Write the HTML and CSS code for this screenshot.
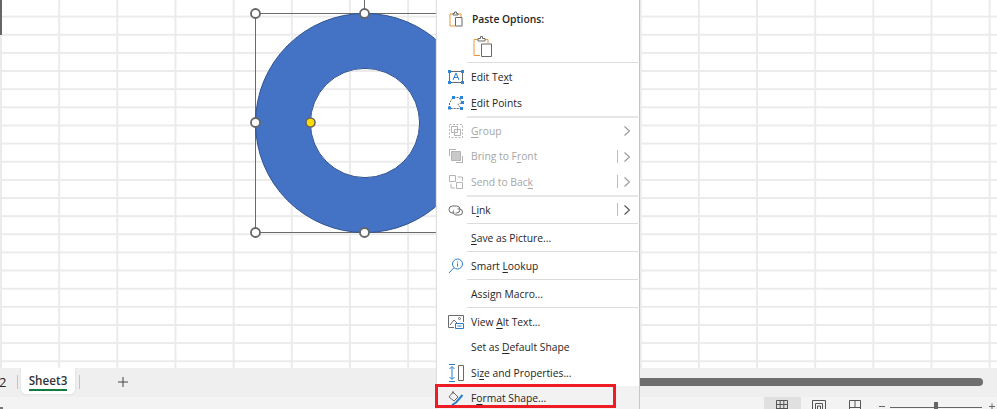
FILE: index.html
```html
<!DOCTYPE html>
<html lang="en">
<head>
<meta charset="utf-8">
<title>Format Shape</title>
<link rel="stylesheet" href="styles.css">
</head>
<body>
<div class="app">
  <main class="sheet">
    <div class="active-cell"></div>
    <svg class="shape" width="240" height="240" viewBox="250 0 240 240">
      <path class="sel" d="M364.5 0V13.5M255.5 13.5H490M255.5 13.5V232.5M255.5 232.5H490"/>
      <path class="donut" fill-rule="evenodd" d="M255.500 123a109.500 109.500 0 1 0 219 0a109.500 109.500 0 1 0 -219 0zM310.400 123a54.600 54.600 0 1 1 109.200 0a54.600 54.600 0 1 1 -109.200 0z"/>
      <circle class="handle" cx="255.500" cy="13.500" r="4.500"/>
      <circle class="handle" cx="364.500" cy="13.500" r="4.500"/>
      <circle class="handle" cx="255.500" cy="122.500" r="4.500"/>
      <circle class="handle" cx="255.500" cy="232.500" r="4.500"/>
      <circle class="handle" cx="364.500" cy="232.500" r="4.500"/>
      <circle class="adjust" cx="310.500" cy="122.500" r="4.500"/>
    </svg>
  </main>

  <div class="tabbar">
    <span class="tab-cut">2</span>
    <span class="tab-sep tab-sep-a"></span>
    <div class="tab"><span class="tab-label">Sheet3</span></div>
    <span class="tab-sep"></span>
    <svg class="add" width="12" height="12" viewBox="0 0 12 12"><path d="M6 1V11M1 6H11"/></svg>
    <div class="scroll"></div>
  </div>

  <div class="status">
    <span class="status-mark"></span>
    <div class="view view-on">
      <svg width="14" height="14" viewBox="0 0 14 14"><path d="M1.500 1.500H12.500V12.500H1.500ZM1.500 5.500H12.500M1.500 9.500H12.500M5.200 1.500V12.500M8.800 1.500V12.500"/></svg>
    </div>
    <div class="view">
      <svg width="14" height="14" viewBox="0 0 14 14"><path d="M.5 1.500H13.500V13.500H.5ZM3.500 4.500H10.500V13.500H3.500ZM5.500 7H8.500V11H5.500Z"/></svg>
    </div>
    <div class="view">
      <svg width="14" height="14" viewBox="0 0 14 14"><path d="M1.500 1.500H12.500V13.500H1.500ZM7 1.500V8.500M1.500 8.500H12.500"/></svg>
    </div>
    <svg class="zoom" width="118" height="12" viewBox="0 0 118 12">
      <path class="zoom-line" d="M0 9.500H6M11 10.500H103M110 9.500H116M113 6.500V12"/>
      <rect class="zoom-thumb" x="55" y="5" width="4" height="7"/>
    </svg>
  </div>

  <nav class="menu">
    <div class="row row-head">
      <svg class="ic" width="16" height="16" viewBox="0 0 16 16"><path class="o" d="M5 3H2V15H7"/><path class="o" d="M10 3H13V6"/><path class="k" d="M5 4V2.500H6.500V1H8.500V2.500H10V4ZM7.500 6.500H14V15H7.500Z"/></svg>
      <b class="head-label">Paste Options:</b>
    </div>
    <div class="paste">
      <svg width="20" height="21" viewBox="0 0 20 21"><path class="o" d="M5 3.500H1V19.500H7"/><path class="o" d="M12 3.500H15V7"/><path class="k" d="M5 5V2.500H7.500V.5H9.500V2.500H12V5ZM8.500 8H18.500V20.500H8.500Z"/></svg>
    </div>
    <div class="sep"></div>

    <div class="row">
      <svg class="ic" width="16" height="16" viewBox="0 0 16 16"><path class="k" d="M1.500 2.500H14.500V13.500H1.500Z"/><path class="b" d="M5 11L8 4L11 11M6 8.500H10"/><path class="bf" d="M0 1H3V4H0ZM13 1H16V4H13ZM0 12H3V15H0ZM13 12H16V15H13Z"/></svg>
      <span>Edit Te<u>x</u>t</span>
    </div>
    <div class="row">
      <svg class="ic" width="16" height="16" viewBox="0 0 16 16"><path class="k" stroke-dasharray="2 1" d="M1.500 13V8L5 2.500H11L14 7.500L10 9.500L13.500 13.500H2"/><path class="bf" d="M0 11.500H3V14.500H0ZM4 1H7V4H4ZM12 1H15V4H12ZM13 6H16V9H13ZM12 12H15V15H12Z"/></svg>
      <span><u>E</u>dit Points</span>
    </div>
    <div class="sep sep-wide"></div>

    <div class="row off">
      <svg class="ic" width="16" height="16" viewBox="0 0 16 16"><path class="g" stroke-dasharray="2 1.500" d="M1.500 1.500H14.500V14.500H1.500Z"/><path class="g" d="M3.500 3.500H9.500V9.500H3.500ZM6.500 6.500H12.500V12.500H6.500Z"/></svg>
      <span><u>G</u>roup</span>
      <svg class="chev" width="6" height="10" viewBox="0 0 6 10"><path d="M.5 .5L5.500 5L.5 9.500"/></svg>
    </div>
    <div class="row off">
      <svg class="ic" width="16" height="16" viewBox="0 0 16 16"><path class="g" d="M1 1.500H8M1.500 1V8M15 14.500H8M14.500 15V8"/><path class="gf" d="M3.500 3.500H12.500V12.500H3.500Z"/></svg>
      <span>Bring to F<u>r</u>ont</span>
      <i class="bar"></i>
      <svg class="chev" width="6" height="10" viewBox="0 0 6 10"><path d="M.5 .5L5.500 5L.5 9.500"/></svg>
    </div>
    <div class="row off">
      <svg class="ic" width="16" height="16" viewBox="0 0 16 16"><path class="g" d="M1.500 1.500H7.500V7.500H1.500ZM8.500 8.500H14.500V14.500H8.500ZM9.500 3H14.500V7M3 9.500V14H7"/></svg>
      <span>Send to Bac<u>k</u></span>
      <i class="bar"></i>
      <svg class="chev" width="6" height="10" viewBox="0 0 6 10"><path d="M.5 .5L5.500 5L.5 9.500"/></svg>
    </div>
    <div class="sep sep-wide"></div>

    <div class="row">
      <svg class="ic" width="16" height="16" viewBox="0 0 16 16"><path class="k" d="M6.500 11H4.500A3.500 3.500 0 0 1 4.500 4H8.500A3.500 3.500 0 0 1 8.500 11H7.500"/><path class="k" d="M9.500 7H11.500A3 3 0 0 1 11.500 13H8A3 3 0 0 1 5.500 8.500"/></svg>
      <span>L<u>i</u>nk</span>
      <i class="bar"></i>
      <svg class="chev chev-on" width="6" height="10" viewBox="0 0 6 10"><path d="M.5 .5L5.500 5L.5 9.500"/></svg>
    </div>
    <div class="sep"></div>
    <div class="row"><span><u>S</u>ave as Picture...</span></div>
    <div class="sep"></div>

    <div class="row">
      <svg class="ic" width="16" height="16" viewBox="0 0 16 16"><circle class="b" cx="9.500" cy="6" r="5"/><path class="b" d="M6 9.500L1 15"/><path class="b" d="M9.500 5.500V8.500M9.500 3.500V4.500"/></svg>
      <span>Smart <u>L</u>ookup</span>
    </div>
    <div class="sep"></div>
    <div class="row"><span>Assi<u>g</u>n Macro...</span></div>
    <div class="sep"></div>

    <div class="row">
      <svg class="ic" width="16" height="16" viewBox="0 0 16 16"><path class="k" d="M6 13.500H.5V1.500H15.500V8"/><path class="k" d="M2 11L6 6L9 9"/><circle class="k" cx="11.500" cy="4.500" r="1"/><path class="b" d="M7.500 9.500H15.500V14.500H7.500ZM9.500 12H13.500"/></svg>
      <span>View <u>A</u>lt Text...</span>
    </div>
    <div class="row"><span>Set as <u>D</u>efault Shape</span></div>
    <div class="row">
      <svg class="ic" width="16" height="18" viewBox="0 0 16 18"><path class="b" d="M4 3V15M1.500 5L4 2.500L6.500 5M1.500 13L4 15.500L6.500 13M1 .5H7M1 17.500H7"/><path class="k" d="M10.500 1.500H15.500V16.500H10.500Z"/></svg>
      <span>Si<u>z</u>e and Properties...</span>
    </div>
    <div class="row row-hot">
      <svg class="ic" width="16" height="16" viewBox="0 0 16 16"><path class="k" d="M1 7L5 2L10 7L6 11Z"/><path class="k" d="M5 1V4"/><path class="b b-thick" d="M14.500 5L8 12.500L4 15"/></svg>
      <span>F<u>o</u>rmat Shape...</span>
    </div>
  </nav>
  <div class="callout"></div>
</div>
</body>
</html>
```

FILE: styles.css
```css
* { box-sizing: border-box; }
html, body { margin: 0; padding: 0; }
body { background: #fff; font-family: "Open Sans", "Noto Sans", "Liberation Sans", sans-serif; color: #262626; }

.app {
  position: relative;
  width: 997px;
  height: 409px;
  overflow: hidden;
  display: flex;
  flex-direction: column;
}

/* worksheet */
.sheet {
  position: relative;
  height: 368px;
  flex: none;
  background-color: #fff;
  background-image:
    linear-gradient(to right, #ebebeb 0, #ebebeb 1.500px, transparent 1.500px),
    linear-gradient(to bottom, #ebebeb 0, #ebebeb 1.500px, transparent 1.500px);
  background-size: 58.170px 18.150px;
  background-position: 0 -2.500px;
}
.active-cell {
  position: absolute;
  left: 0;
  top: 0;
  width: 2px;
  height: 35px;
  background: #666;
}
.shape { position: absolute; left: 250px; top: 0; }
.sel { fill: none; stroke: #6a6a6a; stroke-width: 1; }
.donut { fill: #4472c4; stroke: #2f528f; stroke-width: 1; }
.handle { fill: #fff; stroke: #666; stroke-width: 1.800; }
.adjust { fill: #ffdd00; stroke: #666; stroke-width: 1.600; }

/* sheet tabs + scrollbar */
.tabbar {
  flex: none;
  height: 29px;
  background: #efefef;
  display: flex;
  align-items: flex-start;
  font-size: 13px;
}
.tab-cut { width: 18px; margin-left: -1px; padding-top: 5px; line-height: 18px; }
.tab-sep { width: 1px; height: 14px; margin-top: 7px; background: #c4c4c4; }
.tab-sep-a { margin-right: 3px; }
.tab {
  width: 54px;
  height: 26px;
  margin-right: 4px;
  background: #fff;
  border-radius: 0 0 5px 5px;
  box-shadow: 0 0 2px #d0d0d0;
  display: flex;
  justify-content: center;
}
.tab-label {
  height: 23px;
  padding-top: 4px;
  line-height: 16px;
  font-weight: 600;
  font-size: 11.700px;
  color: #333;
  border-bottom: 2px solid #107c41;
}
.add { margin: 8px 0 0 37px; }
.add path { fill: none; stroke: #444; stroke-width: 1; }
.scroll {
  width: 343px;
  height: 8px;
  margin: 10px 14px 0 auto;
  background: #6e6e6e;
  border-radius: 0 4px 4px 0;
}

/* status bar */
.status {
  flex: none;
  height: 12px;
  background: #f3f3f3;
  display: flex;
  overflow: hidden;
  padding-left: 764px;
  position: relative;
}
.status-mark {
  position: absolute;
  left: 0;
  bottom: 0;
  width: 3px;
  height: 2px;
  background: #777;
}
.view { width: 36.500px; height: 12px; display: flex; justify-content: center; padding-top: 2px; }
.view svg { flex: none; }
.view path { fill: none; stroke: #555; stroke-width: 1; }
.view-on { background: #e0e0e0; }
.zoom { flex: none; margin-left: 5px; }
.zoom-line { fill: none; stroke: #666; stroke-width: 1; }
.zoom-thumb { fill: #666; }

/* context menu */
.menu {
  position: absolute;
  left: 437px;
  top: 0;
  width: 203px;
  height: 409px;
  padding-top: 6px;
  background: #fff;
  border-right: 1px solid #c6c6c6;
  box-shadow: -1px 0 1px #dedede;
  font-size: 10.300px;
}
.row {
  position: relative;
  height: 25.500px;
  padding-left: 34px;
  display: flex;
  align-items: center;
  white-space: nowrap;
}
.row-head { height: 26px; }
.head-label { font-weight: 600; padding-left: 1px; font-size: 10.300px; }
.ic { position: absolute; left: 11px; top: 50%; transform: translateY(-50%); }
.row u { text-underline-offset: 2px; text-decoration-thickness: 1px; }
.off { color: #a6a6a6; }
.row-hot { background: #f2f2f2; }
.paste { height: 30px; padding: 4px 0 0 36px; }
.paste svg { display: block; }
.sep { height: 2.500px; margin-left: 30px; margin-right: 1px; background: linear-gradient(#dcdcdc, #dcdcdc) 0 0 / 100% 1px no-repeat; }
.sep-wide { background-size: 100% 2px; background-image: linear-gradient(#e6e6e6, #e6e6e6); }
.bar { position: absolute; left: 180px; top: 6px; width: 1px; height: 13px; background: #bdbdbd; }
.chev { position: absolute; left: 187px; top: 8px; }
.chev path { fill: none; stroke: #9a9a9a; stroke-width: 1.200; }
.chev-on path { stroke: #555; }

.ic path, .ic circle, .paste path { fill: none; stroke-width: 1; }
.k { stroke: #6a6a6a; }
.o { stroke: #e8983a; stroke-width: 1.400; }
.b { stroke: #2a7fc9; }
.bf { fill: #2a86d6 !important; stroke: none; }
.g { stroke: #b5b5b5; }
.gf { fill: #c9c9c9 !important; stroke: #b5b5b5; }
.ic .b-thick { stroke-width: 2; }

/* annotation */
.callout {
  position: absolute;
  left: 435px;
  top: 384px;
  width: 181px;
  height: 24px;
  border: 3px solid #ee1c25;
}
```
